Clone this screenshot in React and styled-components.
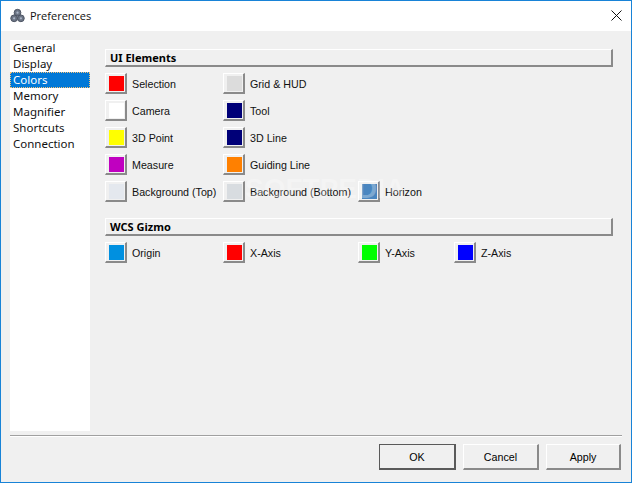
import React from "react";
import styled, { createGlobalStyle } from "styled-components";

const Global = createGlobalStyle`
  html, body { margin: 0; padding: 0; background: #f0f0f0; }
  body { font-family: "Liberation Sans", "Noto Sans", sans-serif; font-size: 11px; color: #000; }
`;

const Win = styled.div`
  position: relative;
  width: 632px;
  height: 483px;
  box-sizing: border-box;
  border: 1px solid #1883d7;
  background: #f0f0f0;
  display: flex;
  flex-direction: column;
  overflow: hidden;
`;
const TitleBar = styled.header`
  height: 30px;
  box-sizing: border-box;
  background: #fff;
  display: flex;
  align-items: center;
  padding: 0 0 2px 9px;
  flex: none;
`;
const TitleText = styled.span`
  font-family: "Open Sans", sans-serif;
  font-size: 11px;
  margin-left: 5px;
  color: #111;
`;
const Close = styled.svg`
  margin-left: auto;
  margin-right: 9px;
`;
const Main = styled.div`
  flex: none;
  height: 400px;
  display: flex;
  padding: 9px 0 0 9px;
  box-sizing: border-box;
`;
const List = styled.ul`
  list-style: none;
  margin: 0;
  padding: 0;
  width: 80px;
  height: 391px;
  background: #fff;
  flex: none;
`;
const Item = styled.li`
  height: 16px;
  line-height: 16px;
  box-sizing: border-box;
  padding-left: 3px;
  font-family: "Noto Sans", sans-serif;
  font-size: 11.5px;
  color: ${p => (p.$active ? "#fff" : "#111")};
  background: ${p => (p.$active ? "#0078d7" : "transparent")};
  ${p => p.$active && "outline: 1px dotted #f5c27a; outline-offset: -1px;"}
`;
const Panel = styled.div`
  flex: none;
  width: 508px;
  margin-left: 15px;
  padding-top: 9px;
`;
const SectionTitle = styled.div`
  height: 18px;
  box-sizing: border-box;
  background: #f0f0f0;
  border-top: 1px solid #fff;
  border-left: 1px solid #fff;
  border-right: 2px solid #8a8a8a;
  border-bottom: 2px solid #8a8a8a;
  font-family: "Noto Sans", sans-serif;
  font-weight: 700;
  font-size: 11px;
  line-height: 15px;
  padding-left: 4px;
`;
const Grid = styled.div`
  display: grid;
  grid-template-columns: 118px 135px 96px 1fr;
  grid-auto-rows: 27px;
  margin-top: 6px;
  margin-bottom: ${p => p.$mb || 0}px;
`;
const Cell = styled.div`
  display: flex;
  align-items: center;
  height: 21px;
  white-space: nowrap;
  grid-column: ${p => p.$col || "auto"};
`;
const Swatch = styled.button`
  width: 22px;
  height: 21px;
  padding: 0 0 0 1px;
  flex: none;
  box-sizing: border-box;
  background: #f0f0f0;
  border-top: 1px solid #fff;
  border-left: 1px solid #fff;
  border-right: 2px solid #8a8a8a;
  border-bottom: 2px solid #8a8a8a;
  display: flex;
  align-items: center;
  justify-content: center;
`;
const Chip = styled.span`
  display: block;
  width: 15px;
  height: 15px;
  background: ${p => p.$c};
`;
const Label = styled.span`
  margin-left: 5px;
  font-size: 10.7px;
  color: #111;
`;
const Rule = styled.div`
  margin-left: 9px;
  width: 612px;
  height: 2px;
  background: linear-gradient(#a0a0a0 0 1px, #fff 1px 2px);
  margin-top: 4px;
  flex: none;
`;
const Footer = styled.footer`
  display: flex;
  justify-content: flex-end;
  padding: 7px 10px 0 0;
  gap: 7px;
`;
const Btn = styled.button`
  width: ${p => p.$w}px;
  height: 26px;
  box-sizing: border-box;
  background: #f0f0f0;
  font: 10.7px "Liberation Sans", sans-serif;
  color: #000;
  padding: 0;
  border-top: ${p => (p.$def ? "1px solid #5a5a5a" : "1px solid #fff")};
  border-left: ${p => (p.$def ? "1px solid #5a5a5a" : "1px solid #fff")};
  border-right: 2px solid ${p => (p.$def ? "#5a5a5a" : "#8a8a8a")};
  border-bottom: 2px solid ${p => (p.$def ? "#5a5a5a" : "#8a8a8a")};
`;
const Watermark = styled.div`
  position: absolute;
  left: 244px;
  top: 172px;
  font: 700 28px "Liberation Sans", sans-serif;
  color: rgba(255, 255, 255, 0.28);
  pointer-events: none;
`;

const Logo = () => (
  <svg width="15" height="15" viewBox="0 0 16 16">
    <circle cx="8" cy="5" r="3.6" fill="#6b7484" stroke="#4a5160" />
    <circle cx="4.4" cy="11" r="3.6" fill="#6b7484" stroke="#4a5160" />
    <circle cx="11.6" cy="11" r="3.6" fill="#6b7484" stroke="#4a5160" />
    <circle cx="8" cy="5" r="1.2" fill="#aab4c6" />
    <circle cx="4.4" cy="11" r="1.2" fill="#aab4c6" />
    <circle cx="11.6" cy="11" r="1.2" fill="#aab4c6" />
  </svg>
);

const Color = ({ c, label, col }) => (
  <Cell $col={col}>
    <Swatch><Chip $c={c} /></Swatch>
    <Label>{label}</Label>
  </Cell>
);

const nav = ["General", "Display", "Colors", "Memory", "Magnifier", "Shortcuts", "Connection"];

export default function App() {
  return (
    <Win>
      <Global />
      <TitleBar>
        <Logo />
        <TitleText>Preferences</TitleText>
        <Close width="11" height="11" viewBox="0 0 11 11">
          <path d="M.5.5l10 10M10.500.5l-10 10" stroke="#111" strokeWidth="1" fill="none" />
        </Close>
      </TitleBar>
      <Main>
        <List>
          {nav.map(n => <Item key={n} $active={n === "Colors"}>{n}</Item>)}
        </List>
        <Panel>
          <SectionTitle>UI Elements</SectionTitle>
          <Grid $mb={10}>
            <Color c="#ff0000" label="Selection" col="1" />
            <Color c="#dcdcdc" label="Grid & HUD" col="2" />
            <Color c="#ffffff" label="Camera" col="1" />
            <Color c="#000078" label="Tool" col="2" />
            <Color c="#ffff00" label="3D Point" col="1" />
            <Color c="#000078" label="3D Line" col="2" />
            <Color c="#c000c0" label="Measure" col="1" />
            <Color c="#ff8000" label="Guiding Line" col="2" />
            <Color c="#e4e8ee" label="Background (Top)" col="1" />
            <Color c="#d8dce0" label="Background (Bottom)" col="2" />
            <Color c="#4a86c0" label="Horizon" col="3" />
          </Grid>
          <SectionTitle>WCS Gizmo</SectionTitle>
          <Grid>
            <Color c="#0090e0" label="Origin" col="1" />
            <Color c="#ff0000" label="X-Axis" col="2" />
            <Color c="#00ff00" label="Y-Axis" col="3" />
            <Color c="#0000ff" label="Z-Axis" col="4" />
          </Grid>
        </Panel>
      </Main>
      <Rule />
      <Footer>
        <Btn $w={77} $def>OK</Btn>
        <Btn $w={76}>Cancel</Btn>
        <Btn $w={75}>Apply</Btn>
      </Footer>
      <Watermark>SOFTPEDIA</Watermark>
    </Win>
  );
}
